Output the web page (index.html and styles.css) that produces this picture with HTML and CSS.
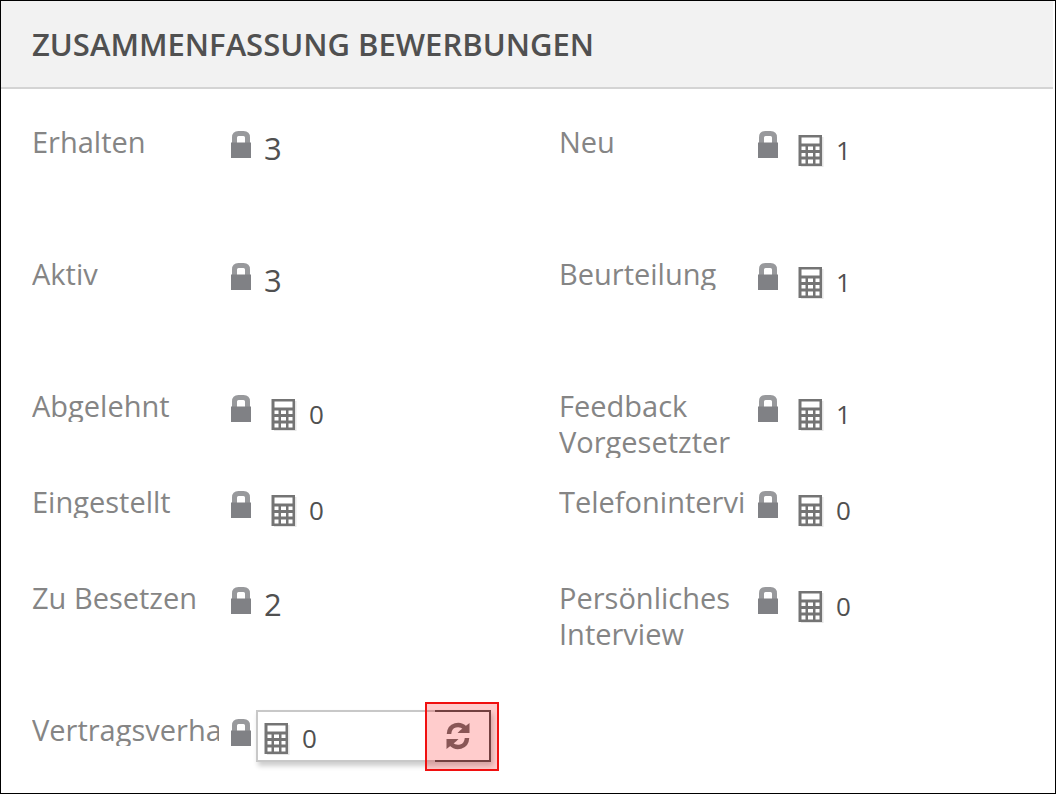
FILE: index.html
```html
<!DOCTYPE html>
<html lang="de">
<head>
<meta charset="utf-8">
<meta name="viewport" content="width=device-width, initial-scale=1">
<title>Zusammenfassung Bewerbungen</title>
<link rel="stylesheet" href="styles.css">
</head>
<body>
<svg class="defs" aria-hidden="true">
  <symbol id="lock" viewBox="0 0 20 28">
    <path d="M3.500 14V6.500Q3.500 2.500 7.500 2.500H12.500Q16.500 2.500 16.500 6.500V14" fill="none" stroke="#98999c" stroke-width="5"/>
    <path d="M0 11.500H20V27H0Z" fill="#808185"/>
  </symbol>
  <symbol id="calc" viewBox="0 0 26 34">
    <path d="M3 3H25.500V33H3Z" fill="#000" opacity=".1"/>
    <path d="M.500 1H24V32H.500Z" fill="#747474"/>
    <path d="M3.500 3.500H21.500V9.500H3.500ZM3.500 12.500H7.500V16H3.500ZM10 12.500H15V16H10ZM17.500 12.500H21.500V16H17.500ZM3.500 19H7.500V22.500H3.500ZM10 19H15V22.500H10ZM17.500 19H21.500V22.500H17.500ZM3.500 25.500H7.500V29.500H3.500ZM10 25.500H15V29.500H10ZM17.500 25.500H21.500V29.500H17.500Z" fill="#fff"/>
  </symbol>
  <symbol id="refresh" viewBox="0 0 24 28">
    <path d="M3 12C3.500 2 14 1 19 6M21 16C20.500 26 10 27 5 22" fill="none" stroke="#6c6c6c" stroke-width="4.500"/>
    <path d="M23.500 1V11H11.500L14 8.500ZM.500 27V17H12.500L10 19.500Z" fill="#6c6c6c"/>
  </symbol>
</svg>
<main class="panel">
  <header class="panel-header"><h1 class="title">ZUSAMMENFASSUNG BEWERBUNGEN</h1></header>
  <div class="fields">
    <div class="field"><span class="label">Erhalten</span><svg class="lock"><use href="#lock"/></svg><span class="value">3</span></div>
    <div class="field"><span class="label">Neu</span><svg class="lock"><use href="#lock"/></svg><span class="rollup"><svg class="calc"><use href="#calc"/></svg>1</span></div>
    <div class="field"><span class="label">Aktiv</span><svg class="lock"><use href="#lock"/></svg><span class="value">3</span></div>
    <div class="field"><span class="label">Beurteilung</span><svg class="lock"><use href="#lock"/></svg><span class="rollup"><svg class="calc"><use href="#calc"/></svg>1</span></div>
    <div class="field"><span class="label">Abgelehnt</span><svg class="lock"><use href="#lock"/></svg><span class="rollup"><svg class="calc"><use href="#calc"/></svg>0</span></div>
    <div class="field"><span class="label">Feedback Vorgesetzter</span><svg class="lock"><use href="#lock"/></svg><span class="rollup"><svg class="calc"><use href="#calc"/></svg>1</span></div>
    <div class="field"><span class="label">Eingestellt</span><svg class="lock"><use href="#lock"/></svg><span class="rollup"><svg class="calc"><use href="#calc"/></svg>0</span></div>
    <div class="field"><span class="label">Telefonintervi</span><svg class="lock"><use href="#lock"/></svg><span class="rollup"><svg class="calc"><use href="#calc"/></svg>0</span></div>
    <div class="field"><span class="label">Zu Besetzen</span><svg class="lock"><use href="#lock"/></svg><span class="value">2</span></div>
    <div class="field"><span class="label">Persönliches Interview</span><svg class="lock"><use href="#lock"/></svg><span class="rollup"><svg class="calc"><use href="#calc"/></svg>0</span></div>
    <div class="field"><label class="label" for="negotiation">Vertragsverha</label><svg class="lock"><use href="#lock"/></svg>
      <div class="editor">
        <svg class="calc"><use href="#calc"/></svg>
        <input class="editor-input" id="negotiation" type="text" value="0" readonly>
        <button class="refresh" type="button" aria-label="Aktualisieren"><svg class="refresh-icon"><use href="#refresh"/></svg></button>
        <span class="highlight"></span>
      </div>
    </div>
  </div>
</main>
</body>
</html>
```
FILE: styles.css
```css
* { box-sizing: border-box; }
body {
  margin: 0;
  background: #fff;
  font-family: "Open Sans", "Noto Sans", sans-serif;
}
.defs { position: absolute; width: 0; height: 0; }
.panel {
  min-height: 100vh;
  border: 1px solid #000;
}
.panel-header {
  margin-right: 2px;
  padding: 22px 31px;
  background: #f2f2f2;
  border-bottom: 2px solid #d4d4d4;
}
.title {
  margin: 0;
  font-size: 31px;
  font-weight: 600;
  line-height: 42px;
  color: #505050;
}
.fields {
  display: grid;
  grid-template-columns: 1fr 1fr;
  grid-template-rows: 132px 132px 96px 96px 132px auto;
  padding-top: 33px;
}
.field {
  display: flex;
  align-items: flex-start;
  min-width: 0;
  padding-left: 31px;
}
.label {
  flex: none;
  width: 187px;
  padding-top: 2px;
  clip-path: inset(0 0 2px 0);
  font-size: 29px;
  line-height: 36px;
  color: #858585;
}
.lock {
  flex: none;
  width: 20px;
  height: 28px;
  margin: 9px 0 0 12px;
}
.value {
  margin: 8px 0 0 13px;
  font-size: 31px;
  line-height: 36px;
  color: #505050;
}
.rollup {
  display: flex;
  gap: 12px;
  margin: 12px 0 0 20px;
  font-size: 26px;
  line-height: 32px;
  color: #505050;
}
.calc {
  flex: none;
  width: 26px;
  height: 34px;
}
.editor {
  position: relative;
  display: flex;
  align-items: flex-end;
  width: 235px;
  height: 52px;
  margin: 0 0 0 5px;
  padding: 0 0 4px 6px;
  border: 2px solid #c8c8c8;
  border-right: 0;
  box-shadow: 2px 4px 5px rgba(0, 0, 0, .2);
}
.editor-input {
  flex: 1;
  min-width: 0;
  height: 36px;
  margin-left: 12px;
  padding: 0;
  border: 0;
  outline: 0;
  background: none;
  font: 26px/36px "Open Sans", "Noto Sans", sans-serif;
  color: #505050;
}
.refresh {
  display: grid;
  place-items: center;
  flex: none;
  width: 56px;
  height: 52px;
  margin-bottom: -6px;
  padding: 0 8px 0 0;
  border: 2px solid #505050;
  border-left: 0;
  background: #fff;
}
.refresh-icon { width: 24px; height: 28px; }
.highlight {
  position: absolute;
  top: -10px;
  right: -8px;
  width: 74px;
  height: 69px;
  border: 2px solid #f01010;
  background: rgba(255, 0, 0, .2);
  pointer-events: none;
}
```
